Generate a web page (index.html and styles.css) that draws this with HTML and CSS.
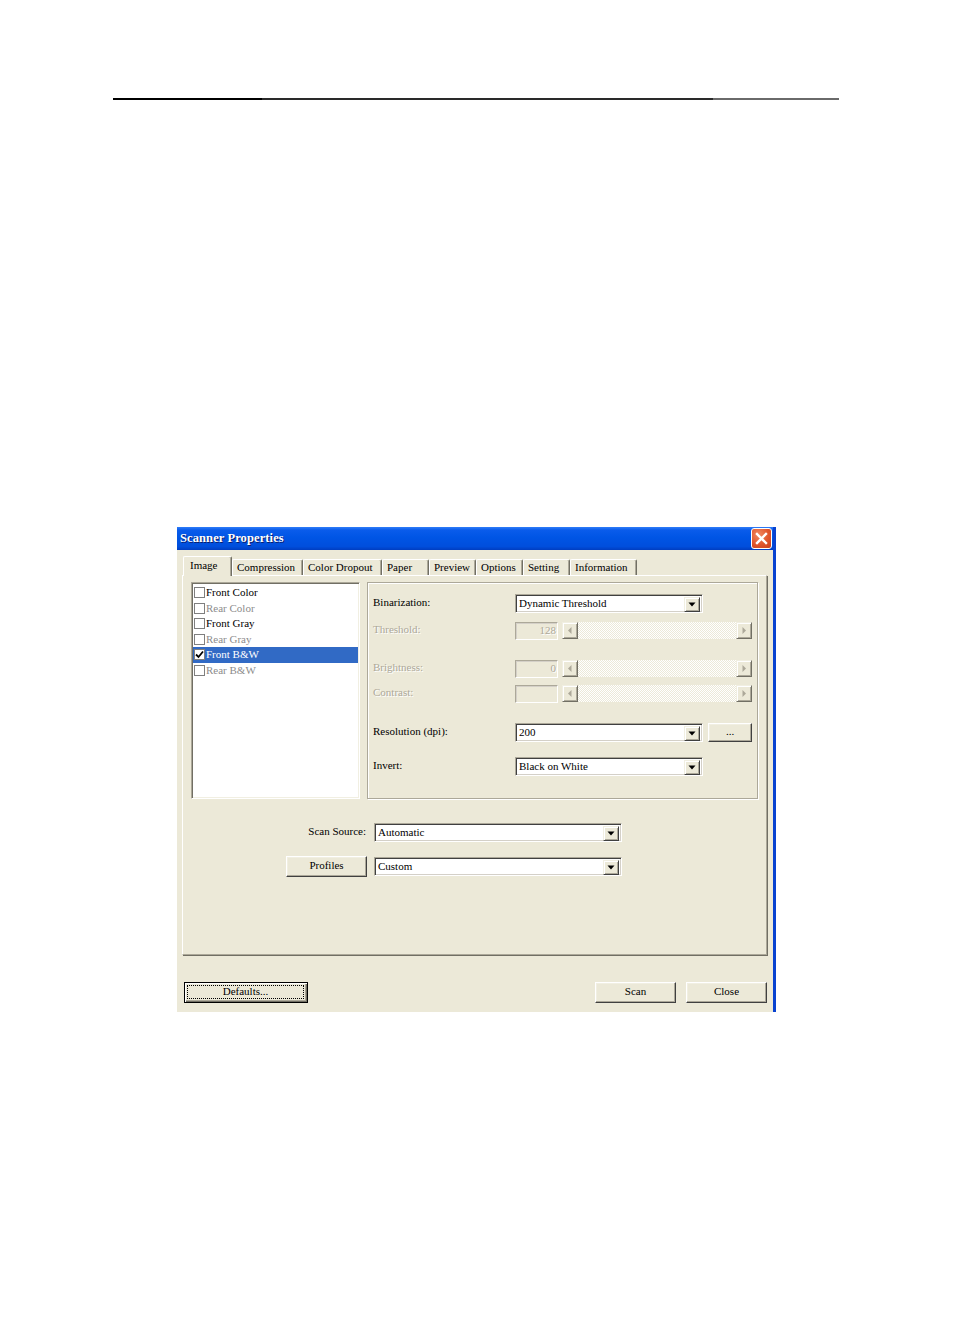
FILE: index.html
```html
<!DOCTYPE html>
<html>
<head>
<meta charset="utf-8">
<title>Scanner Properties</title>
<link rel="stylesheet" href="styles.css">
</head>
<body>
<div class="rule"></div>
<div class="window">
  <div class="titlebar">
    <span class="title">Scanner Properties</span>
    <span class="xbtn"><svg width="21" height="21" viewBox="0 0 21 21"><path d="M6 6L15 15M15 6L6 15" stroke="#fff" stroke-width="2.4" stroke-linecap="square"/></svg></span>
  </div>
  <div class="client">
    <div class="tabs">
      <div class="tab sel t-image">Image</div>
      <div class="tab t-comp">Compression</div>
      <div class="tab t-color">Color Dropout</div>
      <div class="tab t-small">Paper</div>
      <div class="tab t-small">Preview</div>
      <div class="tab t-small">Options</div>
      <div class="tab t-small">Setting</div>
      <div class="tab t-info">Information</div>
    </div>
    <div class="panel">
      <div class="toprow">
        <div class="listbox">
          <div class="item"><span class="chk"></span>Front Color</div>
          <div class="item dis"><span class="chk"></span>Rear Color</div>
          <div class="item"><span class="chk"></span>Front Gray</div>
          <div class="item dis"><span class="chk"></span>Rear Gray</div>
          <div class="item selitem"><span class="chk"><svg width="9" height="9" viewBox="0 0 9 9"><path d="M1 4.5L3.5 7L8 1.5" fill="none" stroke="#000" stroke-width="1.8"/></svg></span>Front B&amp;W</div>
          <div class="item dis"><span class="chk"></span>Rear B&amp;W</div>
        </div>
        <div class="group">
          <div class="grow r1">
            <span class="lbl">Binarization:</span>
            <div class="combo w188"><span class="ctext">Dynamic Threshold</span><span class="dd"><svg width="14" height="14" viewBox="0 0 14 14"><path d="M3.5 5.5h7l-3.5 4z" fill="#000"/></svg></span></div>
          </div>
          <div class="grow r2">
            <span class="lbl dlbl">Threshold:</span>
            <div class="edit">128</div>
            <div class="sbar"><span class="sbtn"><svg width="14" height="15" viewBox="0 0 14 15"><path d="M8.5 4v7l-3.5-3.5z" fill="#ACA899"/></svg></span><span class="track"></span><span class="sbtn"><svg width="14" height="15" viewBox="0 0 14 15"><path d="M5.5 4v7l3.5-3.5z" fill="#ACA899"/></svg></span></div>
          </div>
          <div class="grow r3">
            <span class="lbl dlbl">Brightness:</span>
            <div class="edit">0</div>
            <div class="sbar"><span class="sbtn"><svg width="14" height="15" viewBox="0 0 14 15"><path d="M8.5 4v7l-3.5-3.5z" fill="#ACA899"/></svg></span><span class="track"></span><span class="sbtn"><svg width="14" height="15" viewBox="0 0 14 15"><path d="M5.5 4v7l3.5-3.5z" fill="#ACA899"/></svg></span></div>
          </div>
          <div class="grow r4">
            <span class="lbl dlbl">Contrast:</span>
            <div class="edit"></div>
            <div class="sbar"><span class="sbtn"><svg width="14" height="15" viewBox="0 0 14 15"><path d="M8.5 4v7l-3.5-3.5z" fill="#ACA899"/></svg></span><span class="track"></span><span class="sbtn"><svg width="14" height="15" viewBox="0 0 14 15"><path d="M5.5 4v7l3.5-3.5z" fill="#ACA899"/></svg></span></div>
          </div>
          <div class="grow r5">
            <span class="lbl">Resolution (dpi):</span>
            <div class="combo w188"><span class="ctext">200</span><span class="dd"><svg width="14" height="14" viewBox="0 0 14 14"><path d="M3.5 5.5h7l-3.5 4z" fill="#000"/></svg></span></div>
            <div class="btn dots">...</div>
          </div>
          <div class="grow r6">
            <span class="lbl">Invert:</span>
            <div class="combo w188"><span class="ctext">Black on White</span><span class="dd"><svg width="14" height="14" viewBox="0 0 14 14"><path d="M3.5 5.5h7l-3.5 4z" fill="#000"/></svg></span></div>
          </div>
        </div>
      </div>
      <div class="srcrow">
        <span class="srclbl">Scan Source:</span>
        <div class="combo w248"><span class="ctext">Automatic</span><span class="dd"><svg width="14" height="14" viewBox="0 0 14 14"><path d="M3.5 5.5h7l-3.5 4z" fill="#000"/></svg></span></div>
      </div>
      <div class="profrow">
        <div class="btn profbtn">Profiles</div>
        <div class="combo w248"><span class="ctext">Custom</span><span class="dd"><svg width="14" height="14" viewBox="0 0 14 14"><path d="M3.5 5.5h7l-3.5 4z" fill="#000"/></svg></span></div>
      </div>
    </div>
    <div class="footer">
      <div class="btn defbtn"><span class="focus">Defaults...</span></div>
      <div class="spacer"></div>
      <div class="btn fbtn">Scan</div>
      <div class="btn fbtn">Close</div>
    </div>
  </div>
</div>
</body>
</html>
```
FILE: styles.css
```css
html, body {
  margin: 0;
  padding: 0;
  background: #fff;
}
body {
  font-family: "Liberation Serif", "Times New Roman", serif;
  font-size: 11px;
  font-weight: normal;
  color: #000;
}
.rule {
  margin: 98px 0 0 113px;
  width: 726px;
  height: 2px;
  background: linear-gradient(to right, #000 0, #000 149px, #2a2a2a 149px, #2a2a2a 600px, #6a6a6a 600px);
}
.window {
  margin: 427px 0 0 177px;
  width: 596px;
  height: 485px;
  background: #ECE9D8;
  border-right: 3px solid #0842D0;
  display: flex;
  flex-direction: column;
}
.titlebar {
  height: 23px;
  flex: none;
  display: flex;
  align-items: center;
  background: linear-gradient(#2F7DF8 0, #0A5CEB 3px, #0055E5 45%, #004EDC 85%, #003DC0 100%);
  padding-left: 3px;
  padding-right: 1px;
}
.title {
  flex: 1;
  color: #fff;
  font-weight: bold;
  font-size: 12.5px;
  text-shadow: 1px 1px 0 #0A1E6E;
  letter-spacing: 0.1px;
}
.xbtn {
  width: 19px;
  height: 19px;
  border: 1px solid #fff;
  border-radius: 3px;
  background: radial-gradient(circle at 35% 30%, #F08A63 0, #E0552C 55%, #C8401D 100%);
  display: flex;
  align-items: center;
  justify-content: center;
  overflow: hidden;
}
.xbtn svg { flex: none; }
.client {
  flex: 1;
  display: flex;
  flex-direction: column;
  padding-top: 6px;
}
.tabs {
  height: 19px;
  display: flex;
  align-items: flex-end;
  margin-left: 6px;
}
.tab {
  box-sizing: border-box;
  flex: none;
  height: 16px;
  padding-left: 4px;
  line-height: 15px;
  border-top: 1px solid #fff;
  border-left: 1px solid #fff;
  border-right: 1px solid #716F64;
  box-shadow: inset -1px 0 #ACA899;
  border-radius: 2px 2px 0 0;
  white-space: nowrap;
  font-size: 11px;
}
.t-image { width: 49px; }
.t-comp { width: 71px; }
.t-color { width: 79px; }
.t-small { width: 47px; }
.t-info { width: 67px; }
.tab.sel {
  height: 20px;
  margin-bottom: -1px;
  padding-left: 6px;
  line-height: 16px;
  background: #ECE9D8;
  position: relative;
  z-index: 1;
}
.panel {
  box-sizing: border-box;
  margin-left: 5px;
  width: 585px;
  height: 380px;
  border: 1px solid;
  border-color: #fff #ACA899 #ACA899 #fff;
  box-shadow: 1px 1px 0 #716F64;
  padding: 6px 0 0 8px;
  display: flex;
  flex-direction: column;
}
.toprow {
  display: flex;
  height: 217px;
}
.listbox {
  box-sizing: border-box;
  width: 169px;
  height: 217px;
  background: #fff;
  border: 1px solid;
  border-color: #ACA899 #fff #fff #ACA899;
  box-shadow: inset 1px 1px #716F64, inset -1px -1px #F1EFE2;
  padding: 2px 1px 0 1px;
}
.item {
  height: 15.5px;
  display: flex;
  align-items: center;
  padding-left: 1px;
  white-space: nowrap;
  line-height: 15px;
}
.item.dis { color: #8C8C8C; }
.item.selitem {
  background: #316AC5;
  color: #fff;
}
.chk {
  box-sizing: border-box;
  width: 11px;
  height: 11px;
  flex: none;
  border: 1px solid #7F7F7F;
  background: #fff;
  margin-right: 1px;
  display: flex;
  align-items: center;
  justify-content: center;
}
.group {
  box-sizing: border-box;
  margin-left: 7px;
  width: 391px;
  height: 217px;
  border: 1px solid #ACA899;
  box-shadow: inset 1px 1px #fff, 1px 1px 0 #fff;
  padding: 11px 0 0 5px;
}
.grow {
  height: 19px;
  display: flex;
  align-items: center;
}
.r2 { margin-top: 8px; }
.r3 { margin-top: 19px; }
.r4 { margin-top: 6px; }
.r5 { margin-top: 20px; }
.r6 { margin-top: 15px; }
.lbl {
  width: 142px;
  flex: none;
  white-space: nowrap;
  padding-bottom: 3px;
}
.dlbl {
  color: #ACA899;
  text-shadow: 1px 1px 0 #fff;
}
.combo {
  box-sizing: border-box;
  height: 19px;
  background: #fff;
  border: 1px solid;
  border-color: #ACA899 #fff #fff #ACA899;
  box-shadow: inset 1px 1px #404040, inset -1px -1px #D4D0C8;
  padding: 2px 2px 1px 2px;
  display: flex;
  align-items: center;
}
.w188 { width: 188px; }
.w248 { width: 248px; }
.ctext {
  flex: 1;
  padding-left: 1px;
  padding-bottom: 2px;
  white-space: nowrap;
  line-height: 13px;
}
.dd {
  box-sizing: border-box;
  width: 16px;
  height: 15px;
  flex: none;
  background: #ECE9D8;
  border: 1px solid;
  border-color: #F1EFE2 #404040 #404040 #F1EFE2;
  box-shadow: inset 1px 1px #fff, inset -1px -1px #ACA899;
  display: flex;
  align-items: center;
  justify-content: center;
}
.dd svg { flex: none; }
.edit {
  box-sizing: border-box;
  width: 43px;
  height: 18px;
  border: 1px solid;
  border-color: #ACA899 #fff #fff #ACA899;
  box-shadow: inset 1px 1px #D4D0C8;
  background: #ECE9D8;
  color: #ACA899;
  text-align: right;
  padding-right: 1px;
  line-height: 14px;
  text-shadow: 1px 1px 0 #fff;
}
.sbar {
  margin-left: 4px;
  width: 190px;
  height: 17px;
  display: flex;
}
.sbtn {
  box-sizing: border-box;
  width: 16px;
  height: 17px;
  flex: none;
  background: #ECE9D8;
  border: 1px solid;
  border-color: #F1EFE2 #716F64 #716F64 #F1EFE2;
  box-shadow: inset 1px 1px #fff, inset -1px -1px #ACA899;
  display: flex;
  align-items: center;
  justify-content: center;
}
.sbtn svg { flex: none; }
.track {
  flex: 1;
  background-color: #ECE9D8;
  background-image: repeating-conic-gradient(#fff 0 25%, #ECE9D8 0 50%);
  background-size: 2px 2px;
}
.btn {
  box-sizing: border-box;
  background: #ECE9D8;
  border: 1px solid;
  border-color: #fff #404040 #404040 #fff;
  box-shadow: inset -1px -1px #ACA899, inset 1px 1px #F1EFE2;
  display: flex;
  align-items: center;
  justify-content: center;
  white-space: nowrap;
  padding-bottom: 3px;
}
.dots {
  width: 44px;
  height: 19px;
  margin-left: 5px;
  font-size: 11px;
}
.srcrow {
  margin-top: 24px;
  height: 19px;
  display: flex;
  align-items: center;
}
.srclbl {
  width: 175px;
  text-align: right;
  margin-right: 8px;
  white-space: nowrap;
  padding-bottom: 3px;
}
.profrow {
  margin-top: 14px;
  height: 21px;
  display: flex;
  align-items: center;
}
.profbtn {
  width: 81px;
  height: 21px;
  margin-left: 95px;
  margin-right: 7px;
}
.footer {
  margin-top: 27px;
  height: 21px;
  display: flex;
  padding: 0 6px 0 7px;
}
.spacer { flex: 1; }
.defbtn {
  width: 124px;
  height: 21px;
  border: 1px solid #000;
  box-shadow: inset 1px 1px #fff, inset -1px -1px #716F64, inset -2px -2px #ACA899;
  padding: 2px 3px 3px 2px;
}
.focus {
  box-sizing: border-box;
  flex: 1;
  align-self: stretch;
  border: 1px dotted #000;
  display: flex;
  align-items: center;
  justify-content: center;
  line-height: 12px;
  padding-bottom: 2px;
}
.fbtn {
  width: 81px;
  height: 21px;
  margin-left: 10px;
}
```
